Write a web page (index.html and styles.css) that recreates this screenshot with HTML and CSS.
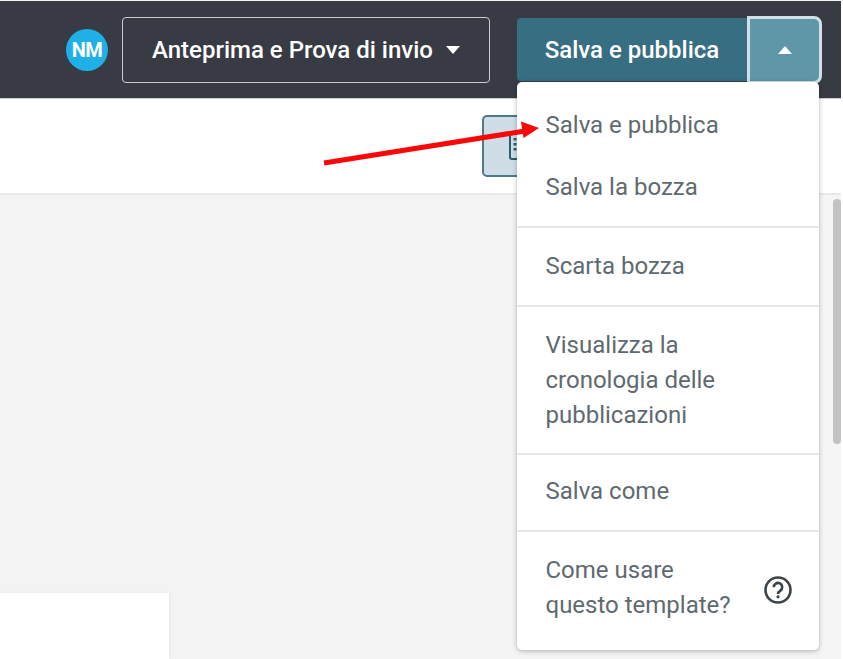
FILE: index.html
```html
<!DOCTYPE html>
<html lang="it">
<head>
<meta charset="utf-8">
<title>Salva e pubblica</title>
<link rel="stylesheet" href="styles.css">
</head>
<body>
<div class="page">
  <header class="topbar">
    <span class="avatar">NM</span>
    <button class="preview-btn"><span>Anteprima e Prova di invio</span><i class="caret down"></i></button>
    <div class="split">
      <button class="save-btn">Salva e pubblica</button>
      <button class="toggle-btn"><i class="caret up"></i></button>
    </div>
  </header>
  <div class="toolbar">
    <span class="tool">
      <svg class="tool-icon" width="20" height="28" viewBox="0 0 20 28"><rect x="1" y="1" width="26" height="25" rx="2" fill="none" stroke="#2f5d6b" stroke-width="2"/><path d="M6 5v15" stroke="#2f5d6b" stroke-width="3" stroke-dasharray="2.500 2.500"/></svg>
    </span>
  </div>
  <main class="canvas">
    <div class="sheet"></div>
    <div class="scrollbar"><div class="thumb"></div></div>
  </main>
</div>
<nav class="menu">
  <section class="group first">
    <a>Salva e pubblica</a>
    <a>Salva la bozza</a>
  </section>
  <section class="group"><a>Scarta bozza</a></section>
  <section class="group tall"><a>Visualizza la<br>cronologia delle<br>pubblicazioni</a></section>
  <section class="group short"><a>Salva come</a></section>
  <section class="group help">
    <a>Come usare<br>questo template?</a>
    <svg class="help-icon" width="30" height="30" viewBox="0 0 30 30"><circle cx="15" cy="15" r="12.500" fill="none" stroke="#3c444a" stroke-width="2.600"/><path d="M10.800 12.200a4.200 4.200 0 1 1 6.600 3.400c-1.500 1-2.400 1.700-2.400 3.300" fill="none" stroke="#3c444a" stroke-width="2.600"/><circle cx="15" cy="21.800" r="1.600" fill="#3c444a"/></svg>
  </section>
</nav>
<svg class="arrow" width="230" height="50" viewBox="0 0 230 50"><path d="M1 43L202 11" stroke="#f80808" stroke-width="5"/><path d="M216 8L198 1.500L200.500 18Z" fill="#f80808"/></svg>
</body>
</html>
```
FILE: styles.css
```css
* { box-sizing: border-box; }
html, body { margin: 0; height: 100%; overflow: hidden; }
body { font-family: Roboto, "Liberation Sans", sans-serif; background: #fff; position: relative; }
.page { width: 841px; height: 659px; display: flex; flex-direction: column; background: #f3f3f3; }
.topbar { height: 98px; flex: none; background: #393b44; border-bottom: 1px solid #c9ccd0; display: flex; align-items: center; justify-content: flex-end; padding-right: 19px; margin-top: 1px; }
.avatar { width: 42px; height: 42px; border-radius: 50%; background: #1eb0e6; color: #fff; font-weight: 700; font-size: 20px; display: flex; align-items: center; justify-content: center; margin-right: 14px; letter-spacing: -.5px; }
.preview-btn { width: 368px; height: 66px; background: transparent; border: 1.500px solid #c9ccd1; border-radius: 4px; color: #fff; font: 500 24px Roboto, sans-serif; display: flex; align-items: center; justify-content: center; gap: 13px; margin-right: 27px; padding: 0; }
.caret { display: block; width: 0; height: 0; border-left: 7.500px solid transparent; border-right: 7.500px solid transparent; }
.caret.down { border-top: 8px solid #fff; }
.caret.up { border-bottom: 8px solid #fff; }
.split { display: flex; height: 63px; align-items: center; }
.save-btn { width: 230px; height: 63px; background: #376e82; border: 0; border-radius: 4px 0 0 4px; color: #fff; font: 500 24px Roboto, sans-serif; padding: 0; }
.toggle-btn { width: 75px; height: 68px; background: #5f97a9; border: 3px solid #cfe0e6; border-radius: 0 8px 8px 0; display: flex; align-items: center; justify-content: center; padding: 0; }
.toolbar { height: 96px; flex: none; background: #fff; border-bottom: 2px solid #e9e9e9; padding: 16px 0 0 482px; }
.tool { display: block; width: 70px; height: 62px; background: #cfdde6; border: 2px solid #4c7a88; border-radius: 5px; padding: 16px 0 0 25px; overflow: hidden; }
.tool-icon { display: block; }
.canvas { flex: 1; position: relative; }
.sheet { position: absolute; left: 0; top: 398px; width: 169px; height: 66px; background: #fff; box-shadow: 1px 0 2px #e6e6e6; }
.scrollbar { position: absolute; right: 0; top: 0; width: 22px; height: 100%; background: #f5f5f5; }
.thumb { margin: 4px 0 0 14px; height: 245px; width: 8px; background: #c2c2c2; border-radius: 4px; }
.menu { position: absolute; left: 517px; top: 82px; width: 302px; height: 568px; background: #fff; border-radius: 5px; box-shadow: 0 1px 5px rgba(0,0,0,.28); color: #5f6a70; font-size: 24px; line-height: 35px; }
.group { border-top: 2px solid #e7e7e7; padding: 21px 29px 21px 28.500px; }
.group.first { border-top: 0; display: flex; flex-direction: column; gap: 27px; padding: 26px 29px 21px 28.500px; }
.group a { display: block; }
.group.tall { padding-bottom: 20px; }
.group.short { padding: 19px 29px 21px 28.500px; }
.group.help { display: flex; align-items: center; justify-content: space-between; padding: 21px 26px 29px 28.500px; }
.help-icon { margin-top: 4px; }
.arrow { position: absolute; left: 323px; top: 120px; }
```
